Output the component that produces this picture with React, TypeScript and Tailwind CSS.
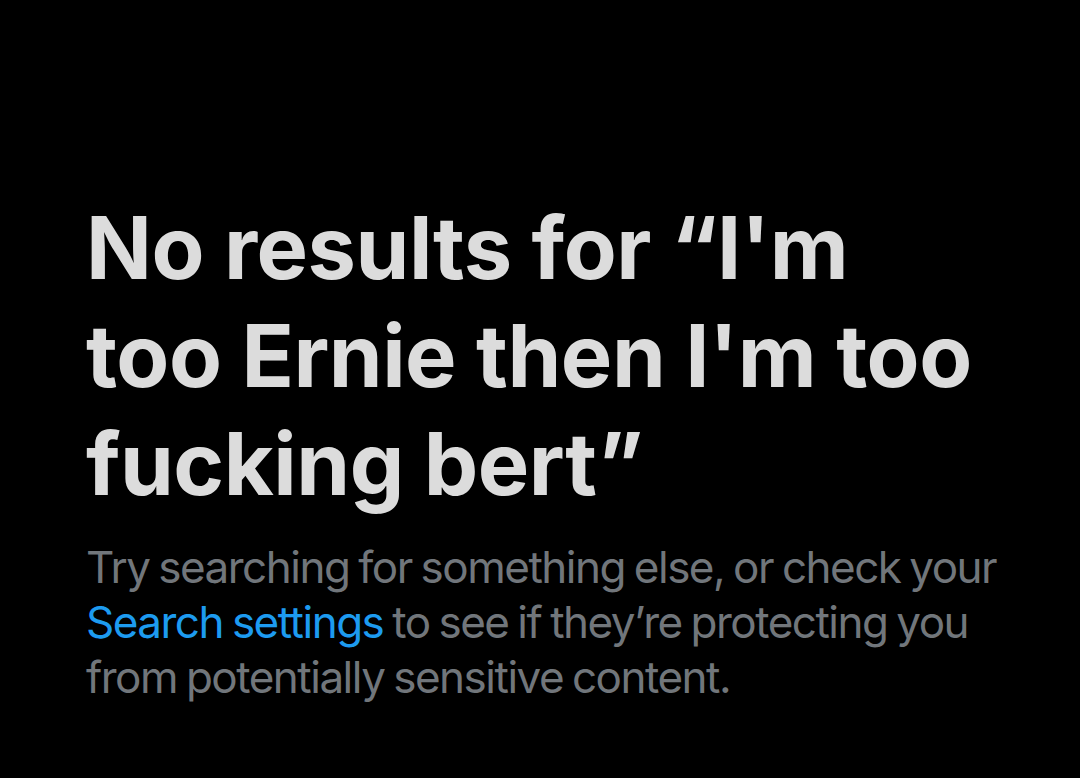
import React from 'react';

const App: React.FC = () => {
  return (
    <div className="w-[1080px] h-[778px] bg-black overflow-hidden font-['Inter','Noto_Sans',sans-serif]">
      <div className="pl-[86px] pt-[194px]">
        <h1 className="text-[86.5px] leading-[108px] font-bold text-[#dcdcdc] tracking-[-0.5px] whitespace-nowrap">
          No results for “I'm
          <br />
          too Ernie then I'm too
          <br />
          fucking bert”
        </h1>
        <p className="mt-[22px] text-[44px] leading-[55px] text-[#71767b] tracking-[-1.5px] [word-spacing:-2px] whitespace-nowrap">
          Try searching for something else, or check your
          <br />
          <span className="text-[#1d9bf0]">Search settings</span> to see if they’re protecting you
          <br />
          from potentially sensitive content.
        </p>
      </div>
    </div>
  );
};

export default App;
